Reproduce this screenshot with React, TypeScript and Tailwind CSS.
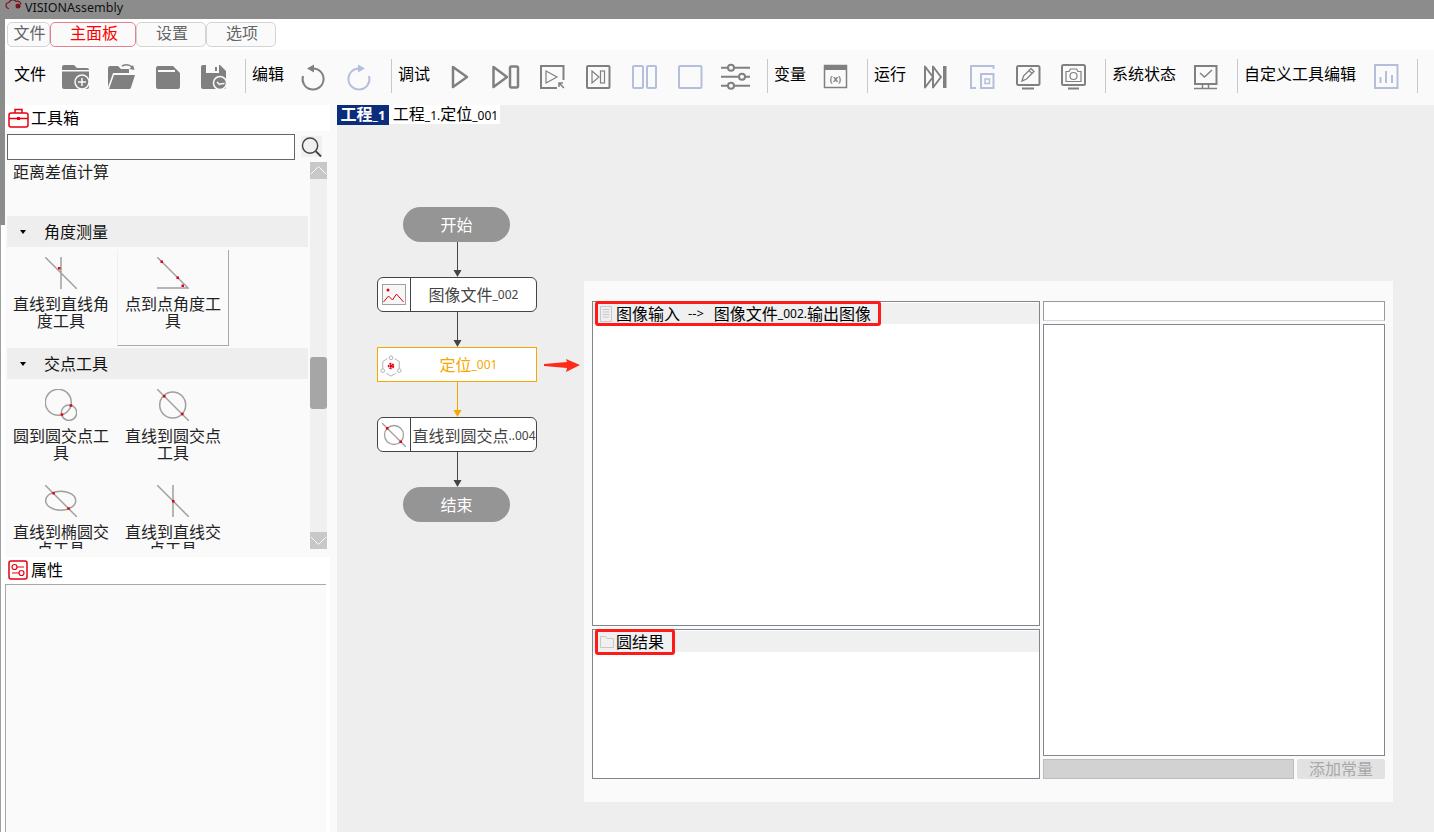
import type { ReactNode } from 'react';

const gray = '#808080';
const blue = '#b4bfdc';
const red = '#e60012';

function Ti({ children }: { children: ReactNode }) {
  return (
    <svg viewBox="0 0 46 34" className="w-[46px] h-[34px] shrink-0" fill="none">
      {children}
    </svg>
  );
}

function FolderAdd() {
  return (
    <Ti>
      <path fill={gray} d="M10 8a2 2 0 0 1 2-2h10l3 3h10a2 2 0 0 1 2 2H10z" />
      <path fill={gray} d="M10 12.500h27V28a2 2 0 0 1-2 2H12a2 2 0 0 1-2-2z" />
      <circle cx="30" cy="23" r="7" fill={gray} stroke="#fafafa" strokeWidth="1.500" />
      <path stroke="#fafafa" strokeWidth="1.500" d="M26 23h8M30 19v8" />
    </Ti>
  );
}

function FolderOpen() {
  return (
    <Ti>
      <path fill={gray} d="M10 28V9a2 2 0 0 1 2-2h8l3 3h8v4H15z" />
      <path fill={gray} d="M11 30l5-14h21l-4 12.500a2 2 0 0 1-2 1.500z" />
      <path stroke={gray} strokeWidth="1.500" d="M24 7c4-2 7-2 10 1" />
      <path fill={gray} d="M36.500 11l-5-1 3.500-4z" />
    </Ti>
  );
}

function SaveIcon() {
  return (
    <Ti>
      <path fill={gray} d="M12 9a2 2 0 0 1 2-2h15l7 7v14a2 2 0 0 1-2 2H14a2 2 0 0 1-2-2z" />
      <rect x="14" y="11" width="17" height="2" fill="#fafafa" />
    </Ti>
  );
}

function SaveAsIcon() {
  return (
    <Ti>
      <path fill={gray} d="M11 8a2 2 0 0 1 2-2h17l6 6v16a2 2 0 0 1-2 2H13a2 2 0 0 1-2-2z" />
      <rect x="16" y="6" width="13" height="8" fill="#fafafa" />
      <rect x="25" y="8" width="2" height="4" fill={gray} />
      <circle cx="30" cy="24" r="6.500" fill={gray} stroke="#fafafa" strokeWidth="1.500" />
      <path stroke="#fafafa" strokeWidth="1.500" d="M27 23l2.500 2.500c1.500-1 3-1 5-1" />
    </Ti>
  );
}

function UndoIcon({ c, flip }: { c: string; flip?: boolean }) {
  return (
    <Ti>
      <g transform={flip ? 'matrix(-1 0 0 1 46 0)' : undefined}>
        <path stroke={c} strokeWidth="2" d="M23 9.500A10.500 10.500 0 1 1 13 17" />
        <path fill={c} d="M24 5.500v8l-7-4z" />
      </g>
    </Ti>
  );
}

function PlayIcon() {
  return (
    <Ti>
      <path stroke={gray} strokeWidth="2.500" strokeLinejoin="round" d="M17 8l14 10-14 10z" />
    </Ti>
  );
}

function StepIcon() {
  return (
    <Ti>
      <path stroke={gray} strokeWidth="2.500" strokeLinejoin="round" d="M11.500 8L25 18 11.500 28z" />
      <rect x="28" y="7.500" width="8" height="21" rx="1.500" stroke={gray} strokeWidth="2.500" />
    </Ti>
  );
}

function PlayBoxIcon() {
  return (
    <Ti>
      <path stroke={gray} strokeWidth="2" d="M35.500 21V7H13v22h16" />
      <path stroke={gray} strokeWidth="1.200" d="M18 12l11 6-11 6z" />
      <path stroke={gray} strokeWidth="1.500" d="M36 29l-5-5M31 28v-4h4" />
    </Ti>
  );
}

function StepBoxIcon() {
  return (
    <Ti>
      <rect x="13" y="7" width="22.500" height="22" rx="1" stroke={gray} strokeWidth="2" />
      <path stroke={gray} strokeWidth="1.200" d="M18 12l7 6-7 6z" />
      <rect x="26.500" y="12" width="4" height="12" stroke={gray} strokeWidth="1.200" />
    </Ti>
  );
}

function SplitIcon() {
  return (
    <Ti>
      <rect x="13" y="7" width="10" height="22" rx="1" stroke={blue} strokeWidth="2" />
      <rect x="27" y="7" width="9" height="22" rx="1" stroke={blue} strokeWidth="2" />
    </Ti>
  );
}

function SquareIcon() {
  return (
    <Ti>
      <rect x="13" y="7" width="22.500" height="22" rx="1" stroke={blue} strokeWidth="2" />
    </Ti>
  );
}

function SlidersIcon() {
  return (
    <Ti>
      <path stroke={gray} strokeWidth="2" d="M9 8.700h29M9 17.700h29M9 26.700h29" />
      <circle cx="19" cy="8.700" r="3" fill="#fafafa" stroke={gray} strokeWidth="2" />
      <circle cx="30" cy="17.700" r="3" fill="#fafafa" stroke={gray} strokeWidth="2" />
      <circle cx="19" cy="26.700" r="3" fill="#fafafa" stroke={gray} strokeWidth="2" />
    </Ti>
  );
}

function VarIcon() {
  return (
    <Ti>
      <rect x="12.500" y="6.500" width="22" height="22" stroke={gray} strokeWidth="1.500" />
      <rect x="12" y="6" width="23" height="5" fill={gray} />
      <text x="23.500" y="23" fontSize="9" fontWeight="700" textAnchor="middle" fill={gray}>
        (x)
      </text>
    </Ti>
  );
}

function FastIcon() {
  return (
    <Ti>
      <path stroke={gray} strokeWidth="2" strokeLinejoin="round" d="M13 7.500L21 18l-8 10.500zM21 7.500L29 18l-8 10.500z" />
      <rect x="31" y="7" width="3.500" height="22" fill={gray} />
    </Ti>
  );
}

function LayersIcon() {
  return (
    <Ti>
      <path stroke={blue} strokeWidth="2" d="M35.500 10V7H13v22h5" />
      <rect x="23" y="15" width="12.500" height="14" stroke={blue} strokeWidth="2" />
      <rect x="27" y="20" width="4.500" height="4.500" stroke={blue} strokeWidth="1.500" />
    </Ti>
  );
}

function EditIcon() {
  return (
    <Ti>
      <rect x="13" y="7" width="22.500" height="19" rx="1.500" stroke={gray} strokeWidth="2" />
      <path stroke={gray} strokeWidth="2" d="M18 29.500h12" />
      <path stroke={gray} strokeWidth="1.300" d="M18 22l1.500-5L27 9.500l3 3-7.500 7.500zM25 11.500l3 3" />
    </Ti>
  );
}

function CameraIcon() {
  return (
    <Ti>
      <rect x="12" y="6" width="23" height="20" rx="1.500" stroke={gray} strokeWidth="2" />
      <path stroke={gray} strokeWidth="2" d="M18 29.500h11" />
      <path stroke={gray} strokeWidth="1.200" d="M16 12.500h3l1.500-2.500h6l1.500 2.500h3v10H16z" />
      <circle cx="23.500" cy="17" r="3.500" stroke={gray} strokeWidth="1.200" />
    </Ti>
  );
}

function StatusIcon() {
  return (
    <Ti>
      <rect x="13" y="7" width="21.500" height="18" stroke={gray} strokeWidth="2" />
      <path stroke={gray} strokeWidth="1.500" d="M18 14l4.500 4 7.500-7" />
      <path stroke={gray} strokeWidth="1.500" d="M20.500 25v4M26.500 25v4" />
      <path stroke={gray} strokeWidth="1.500" d="M12 29.500h23" />
    </Ti>
  );
}

function ChartIcon() {
  return (
    <Ti>
      <rect x="13" y="6" width="22.500" height="23" stroke={blue} strokeWidth="2" />
      <path stroke={blue} strokeWidth="2" d="M18.500 18v6M24 12v12M30 16v8" />
    </Ti>
  );
}

function Sep() {
  return <div className="w-px h-[34px] bg-[#c8c8c8] ml-[9px] mr-[6px] shrink-0" />;
}

function Group({ label, children }: { label: string; children: ReactNode }) {
  return (
    <>
      <span className="text-[16px] leading-[30px] text-black whitespace-nowrap mr-[6px]">{label}</span>
      {children}
      <Sep />
    </>
  );
}

function Sm({ children }: { children: ReactNode }) {
  return <span className="text-[12px]">{children}</span>;
}

function Tab({ label, active, w }: { label: string; active?: boolean; w: string }) {
  return (
    <div
      className={`${w} h-[25px] rounded-[5px] border bg-[#fafafa] flex items-center justify-center pl-[2px] pb-[4px] text-[16px] leading-[20px] ${
        active ? 'border-[#e8808c] text-[#ff0000]' : 'border-[#d4d4d4] text-[#666666]'
      }`}
    >
      {label}
    </div>
  );
}

function SectionHead({ label }: { label: string }) {
  return (
    <div className="mx-[2px] h-[33px] mb-px bg-[#eeeeee] border-b-2 border-[#fafafa] flex items-center pl-[13px] shrink-0">
      <span className="w-0 h-0 border-x-[3.5px] border-x-transparent border-t-[4px] border-t-black" />
      <span className="ml-[18px] text-[16px] leading-[20px] text-[#111111]">{label}</span>
    </div>
  );
}

function ToolCell({ label, icon, selected }: { label: string; icon: ReactNode; selected?: boolean }) {
  return (
    <div
      className={`w-[112px] h-[96px] shrink-0 flex flex-col items-center pt-[7px] ${
        selected ? 'border-r border-b border-r-[#a8a8a8] border-b-[#a8a8a8] border-l border-l-[#f0f0f0]' : ''
      }`}
    >
      <svg viewBox="0 0 32 32" className="w-8 h-8 shrink-0" fill="none">
        {icon}
      </svg>
      <div className="w-[98px] mt-[7px] text-center text-[16px] leading-[17px] text-[#222222]">{label}</div>
    </div>
  );
}

function Dot({ x, y }: { x: number; y: number }) {
  return <rect x={x - 1} y={y - 1} width="2.500" height="2.500" fill={red} />;
}

const L = { stroke: '#a0a0a0', strokeWidth: 1.500 };

function Connector({ color = '#444444' }: { color?: string }) {
  return (
    <svg viewBox="0 0 11 35" className="w-[11px] h-[35px] self-center shrink-0" fill="none">
      <path stroke={color} d="M5.500 0v29" />
      <path fill={color} d="M1.500 28h8l-4 7z" />
    </svg>
  );
}

function Pill({ label }: { label: string }) {
  return (
    <div className="w-[107px] h-[35px] ml-[26px] rounded-full bg-[#959595] text-white text-[16px] flex items-center justify-center">
      {label}
    </div>
  );
}

function FlowNode({ icon, children, drop }: { icon: ReactNode; children: ReactNode; drop?: boolean }) {
  return (
    <div className="h-[35px] rounded-[6px] border border-[#444444] bg-white flex">
      <div className="w-[33px] border-r border-[#444444] flex items-center justify-center shrink-0">{icon}</div>
      <div
        className={`flex-1 flex items-center justify-center whitespace-nowrap text-[16px] text-[#444444] ${
          drop ? 'pt-[3px] pl-px' : ''
        }`}
      >
        {children}
      </div>
    </div>
  );
}

export default function App() {
  return (
    <div className="w-full h-screen overflow-hidden flex flex-col bg-white [font-family:'Noto_Sans','Noto_Sans_CJK_SC',sans-serif]">
      <div className="h-[19px] bg-[#8c8c8c] flex items-start shrink-0 overflow-hidden">
        <svg viewBox="0 0 18 10" className="w-[18px] h-[10px] ml-[5px]" fill="none">
          <path stroke="#7a1520" strokeWidth="1.200" d="M4 8.500a3 3 0 0 1 0-6 4 4 0 0 1 7-1 3.500 3.500 0 0 1 5 3" />
          <circle cx="13" cy="6" r="2.500" fill="#7a1520" />
        </svg>
        <span className="ml-[2px] text-[12.500px] leading-[16px] text-[#111111]">VISIONAssembly</span>
      </div>
      <div className="flex flex-1 min-h-0">
        <div className="w-[5px] shrink-0 flex flex-col">
          <div className="h-[206px] bg-[#8c8c8c]" />
          <div className="flex-1 border-l border-[#a0a0a0]" />
        </div>
        <div className="flex-1 min-w-0 flex flex-col">
          <div className="h-[31px] shrink-0 pl-[2px] pt-[3px] flex items-start">
            <Tab label="文件" w="w-[43px]" />
            <Tab label="主面板" w="w-[86px]" active />
            <Tab label="设置" w="w-[70px]" />
            <Tab label="选项" w="w-[70px]" />
          </div>
          <div className="h-[55px] shrink-0 bg-[#fafafa] pl-[9px] pt-[9px] flex items-start">
            <Group label="文件">
              <FolderAdd />
              <FolderOpen />
              <SaveIcon />
              <SaveAsIcon />
            </Group>
            <Group label="编辑">
              <UndoIcon c={gray} />
              <UndoIcon c={blue} flip />
            </Group>
            <Group label="调试">
              <PlayIcon />
              <StepIcon />
              <PlayBoxIcon />
              <StepBoxIcon />
              <SplitIcon />
              <SquareIcon />
              <SlidersIcon />
            </Group>
            <Group label="变量">
              <VarIcon />
            </Group>
            <Group label="运行">
              <FastIcon />
              <LayersIcon />
              <EditIcon />
              <CameraIcon />
            </Group>
            <Group label="系统状态">
              <StatusIcon />
            </Group>
            <Group label="自定义工具编辑">
              <ChartIcon />
            </Group>
          </div>
          <div className="flex-1 min-h-0 flex">
            <div className="w-[325px] shrink-0 flex flex-col bg-white">
              <div className="h-[26px] flex items-center pl-[3px] shrink-0">
                <svg viewBox="0 0 21 20" className="w-[21px] h-[20px]" fill="none">
                  <rect x="1" y="5" width="19" height="14" rx="2" stroke={red} strokeWidth="1.500" />
                  <path stroke={red} strokeWidth="1.500" d="M7 5V1.500h7V5M1 10.500h19" />
                  <rect x="9" y="9" width="3" height="3" fill={red} />
                </svg>
                <span className="ml-[2px] text-[16px] leading-[20px] text-black">工具箱</span>
              </div>
              <div className="h-[31px] shrink-0 flex items-start pt-[3px] pl-[2px] bg-[#fafafa]">
                <div className="w-[288px] h-[26px] bg-white border border-[#666666]" />
                <div className="ml-[6px] mt-[2px] w-[21px] h-[21px] bg-[#f0f0f0] flex items-center justify-center">
                  <svg viewBox="0 0 22 22" className="w-[22px] h-[22px]" fill="none">
                    <circle cx="9.500" cy="9.500" r="8" stroke="#444444" strokeWidth="1.500" />
                    <path stroke="#444444" strokeWidth="2" d="M15.500 15.500l5.500 5.500" />
                  </svg>
                </div>
              </div>
              <div className="h-[387px] shrink-0 flex bg-[#fafafa]">
                <div className="w-[305px] shrink-0 overflow-hidden flex flex-col">
                  <div className="h-[54px] shrink-0 pl-[8px] text-[16px] leading-[20px] text-[#222222]">距离差值计算</div>
                  <SectionHead label="角度测量" />
                  <div className="flex h-[96px] shrink-0">
                    <ToolCell
                      label="直线到直线角度工具"
                      icon={
                        <>
                          <path {...L} d="M0 0l32 32M16 0v32" />
                          <Dot x={14} y={11} />
                        </>
                      }
                    />
                    <ToolCell
                      label="点到点角度工具"
                      selected
                      icon={
                        <>
                          <path {...L} d="M0 0l31 31H0" />
                          <Dot x={4.500} y={4.500} />
                          <Dot x={20.500} y={20.500} />
                          <Dot x={25.500} y={28.500} />
                        </>
                      }
                    />
                  </div>
                  <div className="h-[2px] shrink-0" />
                  <SectionHead label="交点工具" />
                  <div className="flex flex-wrap shrink-0">
                    <ToolCell
                      label="圆到圆交点工具"
                      icon={
                        <>
                          <circle {...L} cx="13.300" cy="13.300" r="13" />
                          <circle {...L} cx="24" cy="23.700" r="7.700" />
                          <Dot x={25.700} y={16.300} />
                          <Dot x={16.700} y={25.300} />
                        </>
                      }
                    />
                    <ToolCell
                      label="直线到圆交点工具"
                      icon={
                        <>
                          <circle {...L} cx="15.700" cy="16" r="13" />
                          <path {...L} d="M0 0l32 32" />
                          <Dot x={7} y={7} />
                          <Dot x={25} y={24.700} />
                        </>
                      }
                    />
                    <ToolCell
                      label="直线到椭圆交点工具"
                      icon={
                        <>
                          <ellipse {...L} cx="15.700" cy="15.700" rx="15" ry="9.500" />
                          <path {...L} d="M0 0l32 32" />
                          <Dot x={8.300} y={8} />
                          <Dot x={23.300} y={23.300} />
                        </>
                      }
                    />
                    <ToolCell
                      label="直线到直线交点工具"
                      icon={
                        <>
                          <path {...L} d="M0 0l32 32M16 0v32" />
                          <Dot x={16} y={16} />
                        </>
                      }
                    />
                  </div>
                </div>
                <div className="w-[17px] shrink-0 bg-[#f0f0f0] flex flex-col">
                  <div className="h-[17px] bg-[#c8c8c8] flex items-center justify-center">
                    <svg viewBox="0 0 17 17" className="w-[17px] h-[17px]" fill="none">
                      <path stroke="#fafafa" d="M1 12l7.500-7.500L16 12" />
                    </svg>
                  </div>
                  <div className="w-[17px] h-[52px] mt-[178px] rounded-[3px] bg-[#a6a6a6]" />
                  <div className="flex-1" />
                  <div className="h-[17px] bg-[#c8c8c8] flex items-center justify-center">
                    <svg viewBox="0 0 17 17" className="w-[17px] h-[17px]" fill="none">
                      <path stroke="#fafafa" d="M1 5l7.500 7.500L16 5" />
                    </svg>
                  </div>
                </div>
              </div>
              <div className="h-[8px] shrink-0 bg-[#fafafa]" />
              <div className="h-[27px] flex items-start pt-[3px] pl-[3px] shrink-0">
                <svg viewBox="0 0 20 20" className="w-5 h-5" fill="none">
                  <rect x="1" y="1" width="18" height="18" rx="2" stroke={red} strokeWidth="1.500" />
                  <circle cx="6.500" cy="7" r="2.500" stroke={red} strokeWidth="1.200" />
                  <circle cx="13.500" cy="13" r="2.500" stroke={red} strokeWidth="1.200" />
                  <path stroke={red} strokeWidth="1.200" d="M9 7h7M4 13h7" />
                </svg>
                <span className="ml-[3px] text-[16px] leading-[20px] text-black">属性</span>
              </div>
              <div className="flex-1 w-[321px] bg-[#fafafa] border-l border-t border-[#a8a8a8]" />
            </div>
            <div className="w-[7px] shrink-0 bg-[#fafafa]" />
            <div className="flex-1 min-w-0 bg-[#eeeeee] flex flex-col">
              <div className="flex h-[20px] shrink-0 leading-[18px]">
                <div className="w-[52px] bg-[#0b2d7c] text-white font-bold text-[16px] text-center whitespace-nowrap">
                  工程<span className="text-[13px]">_1</span>
                </div>
                <div className="w-[111px] h-[19px] pl-[2px] bg-white text-black text-[16px] text-center whitespace-nowrap">
                  工程<Sm>_1.</Sm>定位<Sm>_001</Sm>
                </div>
              </div>
              <div className="flex items-start pl-[40px]">
                <div className="w-[160px] mt-[82px] flex flex-col shrink-0">
                  <Pill label="开始" />
                  <Connector />
                  <FlowNode
                    icon={
                      <svg viewBox="0 0 24 21" className="w-6 h-[21px]" fill="none">
                        <rect x="0.500" y="0.500" width="23" height="20" fill="#f6f6f6" stroke="#a0a0a0" />
                        <circle cx="6" cy="6" r="1.500" fill={red} />
                        <path stroke={red} d="M1.500 18l5-6 4 4 4-6 7 8" />
                      </svg>
                    }
                  >
                    图像文件<Sm>_002</Sm>
                  </FlowNode>
                  <Connector />
                  <div className="relative h-[35px] border border-[#f5a800] bg-white flex items-center justify-center pl-[23px] pt-px whitespace-nowrap text-[16px] text-[#f5a800]">
                    <svg viewBox="0 0 24 24" className="absolute left-[2px] top-[7px] w-[22px] h-[22px]" fill="none">
                      <path stroke="#aaaaaa" d="M8 4L3 7v8M16 4l5 3v8M7 20l5 3 5-3" />
                      <circle cx="12" cy="3" r="2" fill="#fff" stroke="#aaaaaa" />
                      <circle cx="3" cy="17" r="2" fill="#fff" stroke="#aaaaaa" />
                      <circle cx="21" cy="17" r="2" fill="#fff" stroke="#aaaaaa" />
                      <circle cx="12" cy="12" r="2.500" stroke={red} strokeWidth="2" strokeDasharray="2 1" />
                      <circle cx="12" cy="12" r="1.500" fill={red} />
                    </svg>
                    定位<Sm>_001</Sm>
                    <svg viewBox="0 0 36 14" className="absolute left-[166px] top-[10px] w-9 h-[14px]">
                      <path fill="#ff2a1a" d="M0 6l23-2-1-3 14 6-14 7 1-4-23-2z" />
                    </svg>
                  </div>
                  <Connector color="#f5a800" />
                  <FlowNode
                    drop
                    icon={
                      <svg viewBox="0 0 24 24" className="w-6 h-6" fill="none">
                        <circle cx="12" cy="12" r="9.500" stroke="#a0a0a0" strokeWidth="1.300" />
                        <path stroke="#a0a0a0" strokeWidth="1.300" d="M0 0l24 24" />
                        <rect x="4" y="4" width="2.500" height="2.500" fill={red} />
                        <rect x="17.500" y="17.500" width="2.500" height="2.500" fill={red} />
                      </svg>
                    }
                  >
                    直线到圆交点<Sm>..004</Sm>
                  </FlowNode>
                  <Connector />
                  <Pill label="结束" />
                </div>
                <div className="w-[809px] h-[521px] ml-[47px] mt-[156px] bg-[#fafafa] pt-[20px] pb-[23px] pl-[8px] flex gap-[3px] shrink-0">
                  <div className="w-[448px] flex flex-col gap-[3px]">
                    <div className="h-[325px] bg-white border border-[#80868e] pt-px">
                      <div className="h-[21px] bg-[#f0f0f0] flex items-center pl-[2px]">
                        <div className="h-[25px] w-[286px] border-[3px] border-[#ff1a1a] rounded-[3px] flex items-center whitespace-nowrap text-[16px] text-black">
                          <svg viewBox="0 0 12 16" className="ml-[2px] w-3 h-4 shrink-0" fill="none">
                            <path stroke="#c8c8c8" d="M0.500 0.500h11v15h-11zM2.500 3.500h7M2.500 6h7M2.500 8.500h7M2.500 11h7" />
                          </svg>
                          <span className="ml-[4px]">图像输入</span>
                          <span className="ml-[8px] text-[13px]">--&gt;</span>
                          <span className="ml-[10px]">图像文件</span>
                          <Sm>_002.</Sm>
                          <span>输出图像</span>
                        </div>
                      </div>
                    </div>
                    <div className="flex-1 bg-white border border-[#80868e] pt-px">
                      <div className="h-[21px] bg-[#f0f0f0] flex items-center pl-[2px]">
                        <div className="h-[26px] w-[80px] border-[3px] border-[#ff1a1a] rounded-[3px] flex items-center whitespace-nowrap text-[16px] text-black">
                          <svg viewBox="0 0 14 12" className="ml-[2px] w-[14px] h-3 shrink-0" fill="none">
                            <path stroke="#c8c8c8" d="M0.500 11.500v-11h5l1.500 2h6.500v9z" />
                          </svg>
                          <span className="ml-[2px]">圆结果</span>
                        </div>
                      </div>
                    </div>
                  </div>
                  <div className="w-[342px] flex flex-col gap-[3px]">
                    <div className="h-[20px] bg-white border border-[#9a9a9a] border-b-[#d8d8d8]" />
                    <div className="flex-1 bg-white border border-[#80868e]" />
                    <div className="h-[20px] flex gap-[3px]">
                      <div className="w-[251px] bg-[#d2d2d2] border border-[#bdbdbd]" />
                      <div className="flex-1 rounded-[2px] bg-[#e2e2e2] flex items-center justify-center text-[16px] text-[#a8a8a8]">
                        添加常量
                      </div>
                    </div>
                  </div>
                </div>
              </div>
            </div>
          </div>
        </div>
      </div>
    </div>
  );
}
